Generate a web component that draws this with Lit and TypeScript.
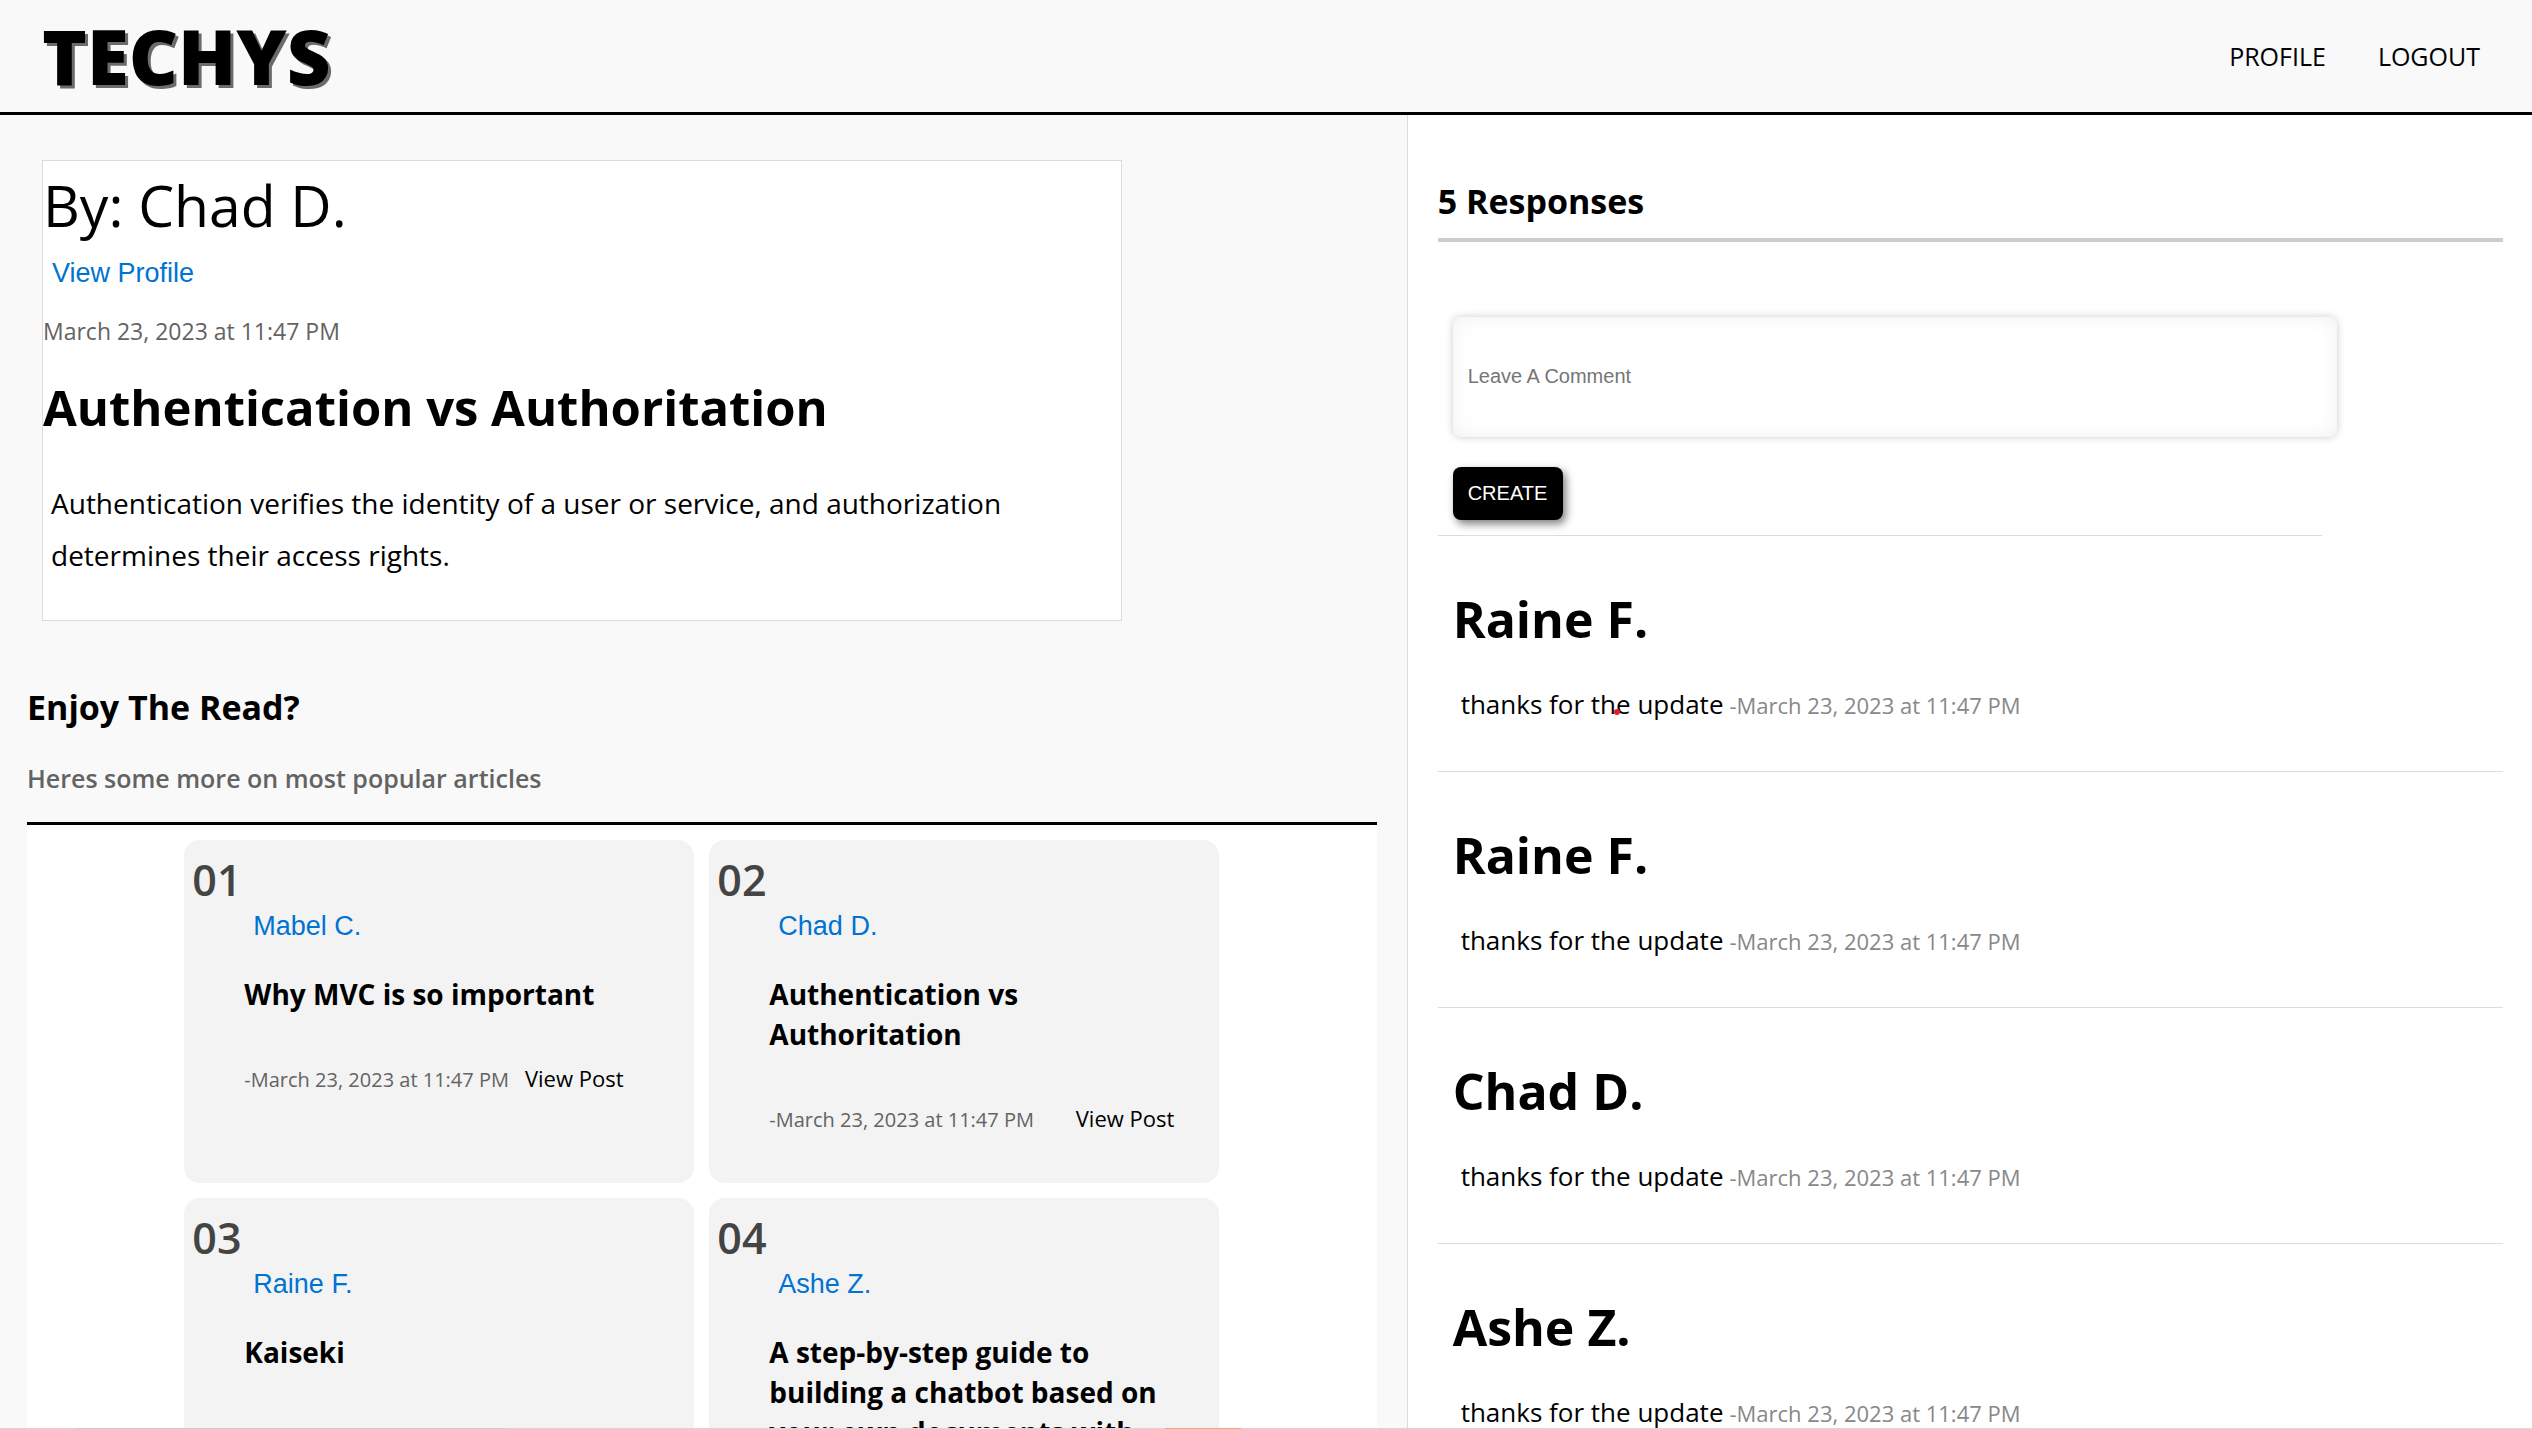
import { LitElement, html, css } from "lit";
import { customElement } from "lit/decorators.js";

interface Article {
  author: string;
  title: string;
}

interface Reply {
  author: string;
  text: string;
  marked?: boolean;
}

const POSTED = "March 23, 2023 at 11:47 PM";

const ARTICLES: Article[] = [
  { author: "Mabel C.", title: "Why MVC is so important" },
  { author: "Chad D.", title: "Authentication vs Authoritation" },
  { author: "Raine F.", title: "Kaiseki" },
  {
    author: "Ashe Z.",
    title: "A step-by-step guide to building a chatbot based on your own documents with GPT",
  },
];

const REPLIES: Reply[] = [
  { author: "Raine F.", text: "thanks for the update", marked: true },
  { author: "Raine F.", text: "thanks for the update" },
  { author: "Chad D.", text: "thanks for the update" },
  { author: "Ashe Z.", text: "thanks for the update" },
  { author: "Mabel C.", text: "thanks for the update" },
];

@customElement("app-root")
export class AppRoot extends LitElement {
  static styles = css`
    :host {
      display: flex;
      flex-direction: column;
      height: 100vh;
      overflow: hidden;
      background: #f9f9f9;
      color: #000;
      font-family: "Open Sans", "Noto Sans", sans-serif;
      font-size: 26px;
    }
    * {
      box-sizing: border-box;
    }
    h1, h2, h3, p {
      margin: 0;
    }
    a {
      color: inherit;
      text-decoration: none;
    }
    .header {
      display: flex;
      flex: none;
      align-items: center;
      justify-content: space-between;
      height: 115px;
      padding: 0 52px 0 42px;
      border-bottom: 3px solid #000;
    }
    .logo {
      font-family: "Noto Sans", "Open Sans", sans-serif;
      font-size: 76px;
      line-height: 100px;
      font-weight: 900;
      text-shadow: 3px 3px 0 #6b6b6b;
    }
    .nav {
      display: flex;
      gap: 52px;
      font-size: 25px;
    }
    .columns {
      display: grid;
      flex: 1;
      grid-template-columns: 5fr 4fr;
      min-height: 0;
    }
    .main {
      padding: 45px 30px 0 27px;
      overflow: hidden;
    }
    .post {
      width: 80%;
      min-height: 461px;
      margin-left: 15px;
      border: 1px solid #dcdcdc;
      background: #fff;
    }
    .by {
      font-size: 57px;
      line-height: 88px;
      font-weight: 400;
    }
    .person {
      color: #0073d1;
      font-family: "Liberation Sans", Arial, sans-serif;
      font-size: 27px;
      line-height: 32px;
    }
    .post .person {
      display: block;
      margin: 8px 9px 26px;
    }
    .date {
      color: #636363;
      font-size: 23px;
      line-height: 32px;
    }
    .title {
      margin: 22px 0 32px;
      font-size: 49px;
      line-height: 76px;
      font-weight: 700;
    }
    .body {
      padding: 0 8px;
      font-size: 28px;
      line-height: 52px;
    }
    .heading {
      font-size: 34px;
      line-height: 48px;
      font-weight: 700;
    }
    .more {
      margin-top: 62px;
    }
    .lead {
      margin-top: 29px;
      padding-bottom: 26px;
      border-bottom: 3px solid #000;
      color: #636363;
      font-size: 25px;
      line-height: 36px;
      font-weight: 600;
    }
    .cards {
      display: grid;
      grid-template-columns: repeat(2, 510px);
      grid-auto-rows: minmax(343px, auto);
      justify-content: center;
      gap: 15px;
      padding: 15px 0;
      background: #fff;
    }
    .card {
      padding: 10px 45px 40px 60px;
      border-radius: 16px;
      background: #f3f3f3;
    }
    .number {
      margin-left: -52px;
      color: #444;
      font-size: 43px;
      line-height: 60px;
      font-weight: 600;
    }
    .card .person {
      display: block;
      margin: 0 9px;
    }
    .info {
      display: flex;
      flex-direction: column;
      gap: 49px;
      width: fit-content;
      margin-top: 32px;
    }
    .subject {
      font-size: 28px;
      line-height: 40px;
      font-weight: 700;
    }
    .meta {
      display: flex;
      align-items: baseline;
      justify-content: space-between;
      gap: 16px;
      white-space: nowrap;
    }
    .meta .date {
      font-size: 20px;
    }
    .open {
      font-size: 22px;
      font-weight: 500;
    }
    .side {
      padding: 62px 29px 0 30px;
      overflow: hidden;
      border-left: 1px solid #dcdcdc;
      background: #fff;
    }
    .side .heading {
      padding-bottom: 13px;
      border-bottom: 4px solid #ccccd4;
    }
    .form {
      display: flex;
      flex-direction: column;
      align-items: flex-start;
      gap: 30px;
      width: 83%;
      padding: 75px 0 15px 15px;
      border-bottom: 1px solid #dcdcdc;
    }
    .entry,
    .submit {
      border: 0;
      border-radius: 8px;
      font-family: "Liberation Sans", Arial, sans-serif;
      font-size: 20px;
    }
    .entry {
      flex: none;
      width: calc(100% + 15px);
      height: 120px;
      padding: 0 15px 2px;
      background: #fff;
      box-shadow: 0 0 8px rgba(0, 0, 0, 0.2), inset 0 0 20px rgba(0, 0, 0, 0.06);
    }
    .entry::placeholder {
      color: #757575;
    }
    .submit {
      height: 53px;
      padding: 0 16px 0 15px;
      background: #000;
      color: #fff;
      box-shadow: 3px 4px 8px rgba(0, 0, 0, 0.5);
    }
    .reply {
      height: 236px;
      padding: 45px 15px 0;
      border-bottom: 1px solid #dcdcdc;
    }
    .name {
      font-size: 50px;
      line-height: 76px;
      font-weight: 700;
    }
    .said {
      display: flex;
      align-items: baseline;
      gap: 6px;
      margin-top: 27px;
      padding-left: 8px;
      line-height: 40px;
    }
    .said .date {
      color: #888;
      font-size: 22px;
    }
    .text {
      position: relative;
    }
    .dot {
      position: absolute;
      top: 25px;
      left: 153px;
      width: 6px;
      height: 6px;
      border-radius: 50%;
      background: #ed1c24;
    }
    .edge {
      flex: none;
      height: 1px;
      background: linear-gradient(
        to right,
        #e2d0d9 0 3%,
        #cccccc 3% 20%,
        #e2d0d9 20% 38%,
        #f3f3f3 38% 40%,
        #e2d0d9 40% 46%,
        #f2a670 46% 49%,
        #e2d0d9 49%,
        #e0dae2 100%
      );
    }
  `;

  render() {
    return html`
      <header class="header">
        <a class="logo" href="#">TECHYS</a>
        <nav class="nav">
          <a href="#profile">PROFILE</a>
          <a href="#logout">LOGOUT</a>
        </nav>
      </header>
      <div class="columns">
        <main class="main">
          <article class="post">
            <p class="by">By: Chad D.</p>
            <a class="person" href="#author">View Profile</a>
            <p class="date">${POSTED}</p>
            <h1 class="title">Authentication vs Authoritation</h1>
            <p class="body">
              Authentication verifies the identity of a user or service, and authorization
              determines their access rights.
            </p>
          </article>
          <section class="more">
            <h2 class="heading">Enjoy The Read?</h2>
            <p class="lead">Heres some more on most popular articles</p>
            <div class="cards">
              ${ARTICLES.map(
                (item, i) => html`
                  <article class="card">
                    <p class="number">0${i + 1}</p>
                    <a class="person" href="#author">${item.author}</a>
                    <div class="info">
                      <h3 class="subject">${item.title}</h3>
                      <div class="meta">
                        <span class="date">-${POSTED}</span>
                        <a class="open" href="#post">View Post</a>
                      </div>
                    </div>
                  </article>
                `
              )}
            </div>
          </section>
        </main>
        <aside class="side">
          <h2 class="heading">${REPLIES.length} Responses</h2>
          <form class="form">
            <input class="entry" type="text" aria-label="Leave A Comment" placeholder="Leave A Comment" />
            <button class="submit" type="button">CREATE</button>
          </form>
          ${REPLIES.map(
            (item) => html`
              <article class="reply">
                <h2 class="name">${item.author}</h2>
                <p class="said">
                  <span class="text">${item.text}${item.marked ? html`<i class="dot"></i>` : ""}</span>
                  <span class="date">-${POSTED}</span>
                </p>
              </article>
            `
          )}
        </aside>
      </div>
      <div class="edge"></div>
    `;
  }
}
